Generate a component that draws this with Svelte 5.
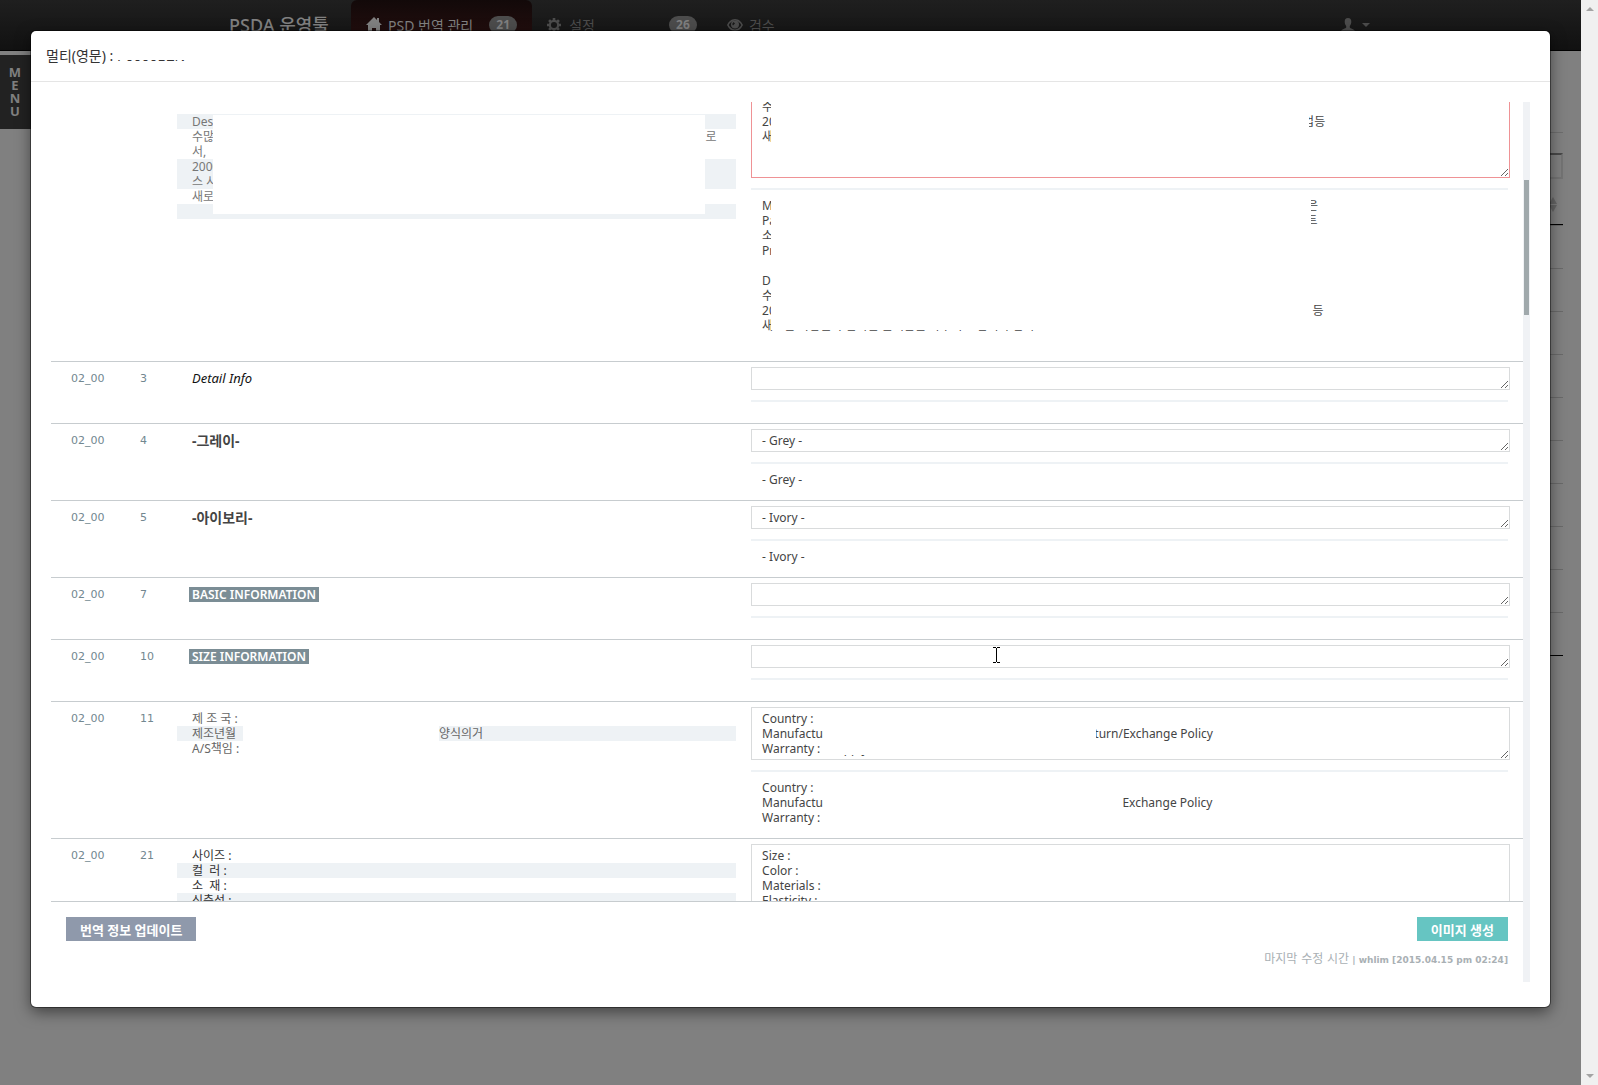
<script>
	import { onMount } from 'svelte'

	const gap = (n) => ' '.repeat(n)

	const rows = [
		{
			code: '02_00',
			no: 2,
			tone: 'soft',
			source: ['', '', '', '', '', '', '', 'Desc', '수많은' + gap(154) + '로\n서,', '2000\n스 사', '새로운', ''],
			value: 'Ma\nPa\n소재\nPro\n\nDe\n수많\n20' + gap(169) + '업등\n새\n\n',
			reference: 'Ma' + gap(169) + '은\nPa' + gap(170) + '트\n소재\nPro\n\nDe\n수많\n20' + gap(172) + '등\n새로운 사람들과 만나는 즐거움을 나누어 드립니다 감사\n ',
			warning: true,
			sourceMasks: [{ left: 36, top: 106, width: 492, height: 99 }],
			masks: [
				{ left: 20, top: 90, width: 538, height: 70 },
				{ left: 20, top: 190, width: 540, height: 133 },
				{ left: 20, top: 310, width: 500, height: 15 }
			]
		},
		{ code: '02_00', no: 3, tone: 'italic', source: ['Detail Info'], value: '', reference: '' },
		{ code: '02_00', no: 4, tone: 'bold', source: ['-그레이-'], value: '- Grey -', reference: '- Grey -' },
		{ code: '02_00', no: 5, tone: 'bold', source: ['-아이보리-'], value: '- Ivory -', reference: '- Ivory -' },
		{ code: '02_00', no: 7, tone: 'label', source: ['BASIC INFORMATION'], value: '', reference: '' },
		{ code: '02_00', no: 10, tone: 'label', source: ['SIZE INFORMATION'], value: '', reference: '', pointer: true },
		{
			code: '02_00',
			no: 11,
			tone: 'mid',
			source: ['제 조 국 :', '제조년월' + gap(65) + '양식의거', 'A/S책임 :'],
			value: 'Country :\nManufactu' + gap(87) + 'turn/Exchange Policy\nWarranty :   Supply staff,',
			reference: 'Country :\nManufactu' + gap(96) + 'Exchange Policy\nWarranty :',
			sourceMasks: [{ left: 66, top: 15, width: 196, height: 30 }],
			masks: [
				{ left: 74, top: 19, width: 271, height: 15 },
				{ left: 74, top: 34, width: 130, height: 14 }
			]
		},
		{
			code: '02_00',
			no: 21,
			tone: 'dark',
			source: ['사이즈 :', '컬  러 :', '소  재 :', '신축성 :', '비침 :', '안감 :'],
			value: 'Size :\nColor :\nMaterials :\nElasticity :\nSheer :\nLining :',
			reference: 'Size :\nColor :\nMaterials :\nElasticity :\nSheer :\nLining :'
		}
	]

	const listRows = Array(10)

	let scroller

	onMount(() => {
		scroller.scrollTop = 103
	})

	const box = (m) => `left:${m.left}px;top:${m.top}px;width:${m.width}px;height:${m.height}px`
</script>

<div class="screen">
	<div class="page">
		<nav class="navbar">
			<a class="brand" href="#home">PSDA 운영툴</a>
			<a class="tab active" href="#translate">
				<svg width="16" height="16" viewBox="0 0 16 16"><path d="M8 0 0 8h2v8h4v-5h4v5h4V8h2l-3-3V1h-2v2z" /></svg>
				<span>PSD 번역 관리</span>
				<span class="badge">21</span>
			</a>
			<a class="tab settings" href="#settings">
				<svg width="14" height="14" viewBox="0 0 16 16"><path fill-rule="evenodd" d="M6.500 0h3v2.200l1.500.6 1.600-1.500 2.100 2.100-1.500 1.600.6 1.500H16v3h-2.200l-.6 1.500 1.500 1.600-2.100 2.100-1.600-1.500-1.500.6V16h-3v-2.200L5 13.200l-1.600 1.500-2.100-2.100L2.800 11l-.6-1.500H0v-3h2.200L2.800 5 1.300 3.400l2.100-2.100L5 2.800l1.500-.6zM8 4.500a3.500 3.500 0 1 0 0 7 3.500 3.500 0 0 0 0-7z" /></svg>
				<span>설정</span>
				<span class="badge">26</span>
			</a>
			<a class="tab" href="#review">
				<svg width="16" height="14" viewBox="0 0 16 14"><path fill-rule="evenodd" d="M8 1C4 1 1.500 4 0 7c1.500 3 4 6 8 6s6.500-3 8-6c-1.500-3-4-6-8-6zm0 1.500c2.900 0 5 2.200 6.300 4.500C13 9.300 10.900 11.500 8 11.500S3 9.300 1.700 7C3 4.700 5.100 2.500 8 2.500z" /><path fill-rule="evenodd" d="M8 2.500a4 4 0 1 0 0 8 4 4 0 0 0 0-8zM6.500 4 8 5.500 6 7.500 5.200 6z" /></svg>
				<span>검수</span>
			</a>
			<button class="user" aria-label="user menu">
				<svg width="14" height="15" viewBox="0 0 14 15"><path d="M7 0c2.400 0 3.400 1.600 3.300 4-.1 1.800-.7 3.100-1.500 4v1.500c0 1 5.200 1.500 5.200 4V15H0v-1.500c0-2.500 5.200-3 5.200-4V8C4.400 7.100 3.800 5.800 3.700 4 3.600 1.600 4.600 0 7 0z" /></svg>
				<svg width="8" height="4" viewBox="0 0 8 4"><path d="M0 0h8L4 4z" /></svg>
			</button>
		</nav>
		<main class="list">
			<hr />
			<input type="text" aria-label="search" />
			<table>
				<thead>
					<tr>
						<th>
							<svg width="8" height="15" viewBox="0 0 8 15"><path d="M0 7l4-7 4 7zM0 8h8l-4 7z" /></svg>
						</th>
					</tr>
				</thead>
				<tbody>
					{#each listRows as _}
						<tr><td></td></tr>
					{/each}
					<tr class="last"><td></td></tr>
				</tbody>
			</table>
		</main>
	</div>
	<div class="page-scroll">
		<svg width="8" height="4" viewBox="0 0 8 4"><path d="M0 4h8L4 0z" /></svg>
		<svg width="8" height="4" viewBox="0 0 8 4"><path d="M0 0h8L4 4z" /></svg>
	</div>

	<button class="menu"><span>M</span><span>E</span><span>N</span><span>U</span></button>

	<section class="modal" role="dialog" aria-label="멀티(영문)">
		<header>
			<h1>멀티(영문) : <span class="product">P0000BZN<i></i></span></h1>
		</header>
		<div class="body">
			<div class="content">
				<div class="scroller" bind:this={scroller}>
					<table class="texts">
						<colgroup>
							<col class="c-code" />
							<col class="c-no" />
							<col class="c-source" />
							<col />
						</colgroup>
						<tbody>
							{#each rows as row}
								<tr>
									<td class="code">{row.code}</td>
									<td class="no">{row.no}</td>
									<td class="source {row.tone}">
										<div class="cell">
											{#each row.source as line}
												<p><span>{line}</span></p>
											{/each}
											{#each row.sourceMasks ?? [] as m}
												<i class="mask" style={box(m)}></i>
											{/each}
										</div>
									</td>
									<td class="target">
										<div class="cell">
											<textarea
												class:warning={row.warning}
												rows={row.value.split('\n').length}
												aria-label="translation {row.no}"
												spellcheck="false"
												value={row.value}
											></textarea>
											<hr />
											<p class="reference">{row.reference}</p>
											{#each row.masks ?? [] as m}
												<i class="mask" style={box(m)}></i>
											{/each}
											{#if row.pointer}
												<svg class="pointer" width="7" height="16" viewBox="0 0 7 16" shape-rendering="crispEdges">
													<path d="M0 0h3v1H0zM4 0h3v1H4zM3 1h1v14H3zM0 15h3v1H0zM4 15h3v1H4z" />
												</svg>
											{/if}
										</div>
									</td>
								</tr>
							{/each}
						</tbody>
					</table>
				</div>
				<footer>
					<div class="actions">
						<button class="update">번역 정보 업데이트</button>
						<button class="create">이미지 생성</button>
					</div>
					<p><span>마지막 수정 시간</span> | whlim [2015.04.15 pm 02:24]</p>
				</footer>
			</div>
			<div class="track"><div class="thumb"></div></div>
		</div>
	</section>
</div>

<style>
	:global(body) {
		margin: 0;
		font-family: 'Noto Sans', 'Noto Sans CJK KR', sans-serif;
		font-size: 12px;
		line-height: 15px;
	}
	.screen {
		position: relative;
		display: flex;
		height: 100vh;
		overflow: hidden;
		background: #808080;
	}
	p,
	h1 {
		margin: 0;
	}
	button {
		font-family: inherit;
		border: 0 none;
		padding: 0;
	}
	hr {
		border: 0 none;
		margin: 0;
	}

	/* page behind the dialog */
	.page {
		flex: 1;
	}
	.navbar {
		display: flex;
		align-items: stretch;
		height: 50px;
		padding-left: 229px;
		border-bottom: 1px solid #000;
		background: linear-gradient(#1f1f1f, #111);
		color: #4c4c4c;
		fill: #4c4c4c;
	}
	.navbar a {
		display: flex;
		align-items: center;
		color: inherit;
		text-decoration: none;
	}
	.brand {
		width: 122px;
		font-size: 18px;
		font-weight: 500;
		white-space: nowrap;
	}
	.navbar a.brand {
		color: #808080;
	}
	.tab {
		gap: 6px;
		padding: 0 15px;
		font-size: 14px;
	}
	.navbar .active {
		color: #808080;
		fill: #808080;
		border-radius: 6px 6px 0 0;
		background: linear-gradient(#120909, #2a1010);
	}
	.tab .badge {
		min-width: 28px;
		margin-left: 10px;
		border-radius: 9px;
		background: #4c4c4c;
		color: #808080;
		font-size: 12px;
		font-weight: bold;
		line-height: 18px;
		text-align: center;
	}
	.tab.settings {
		gap: 8px;
	}
	.settings .badge {
		margin-left: 66px;
	}
	.user {
		display: flex;
		align-items: center;
		gap: 7px;
		margin: 0 211px 0 auto;
		background: transparent;
		fill: #4c4c4c;
	}
	.list {
		padding: 81px 18px 0 31px;
	}
	.list hr {
		height: 1px;
		background: #6e6e6e;
	}
	.list input {
		display: block;
		width: 200px;
		height: 26px;
		box-sizing: border-box;
		margin: 20px 0 0 auto;
		border: 2px solid #747474;
		border-top-color: #484848;
		background: transparent;
	}
	.list table {
		width: 100%;
		border-spacing: 0;
	}
	.list th {
		height: 45px;
		padding: 0 6px 0 0;
		border-bottom: 1px solid #000;
		text-align: right;
		fill: #666;
	}
	.list th svg {
		display: block;
		margin: 5px 0 0 auto;
	}
	.list td {
		height: 42px;
		padding: 0;
		border-top: 1px solid #6a6a6a;
	}
	.list .last td {
		border-color: #000;
	}
	.page-scroll {
		display: flex;
		flex-direction: column;
		justify-content: space-between;
		align-items: center;
		width: 17px;
		box-sizing: border-box;
		padding: 7px 0;
		background: #f0f0f0;
		fill: #a3a3a3;
	}
	.menu {
		position: absolute;
		left: 0;
		top: 55px;
		display: flex;
		flex-direction: column;
		align-items: center;
		justify-content: center;
		width: 34px;
		height: 74px;
		padding-right: 4px;
		border-radius: 0 3px 3px 0;
		background: #222;
		color: #808080;
		font-size: 13px;
		font-weight: bold;
		line-height: 13px;
	}

	/* dialog */
	.modal {
		position: absolute;
		inset: 31px 48px 78px 31px;
		display: flex;
		flex-direction: column;
		border-radius: 5px;
		background: #fff;
		box-shadow: 0 0 0 1px rgba(0, 0, 0, 0.4), 0 5px 15px rgba(0, 0, 0, 0.5);
		color: #333;
	}
	header {
		padding: 15px;
		border-bottom: 1px solid #e5e5e5;
	}
	h1 {
		font-size: 14px;
		font-weight: normal;
		line-height: 20px;
	}
	.product {
		position: relative;
	}
	.product i {
		position: absolute;
		inset: 0 0 5px 0;
		background: #fff;
	}
	.body {
		flex: 1;
		display: flex;
		min-height: 0;
		padding: 20px 20px 25px;
	}
	.content {
		flex: 1;
		display: flex;
		flex-direction: column;
		min-width: 0;
	}
	.scroller {
		flex: 1;
		overflow-y: auto;
		scrollbar-width: none;
	}
	.track {
		width: 7px;
		box-sizing: border-box;
		padding: 78px 1px 0;
		background: #f0f2f5;
	}
	.thumb {
		width: 5px;
		height: 135px;
		background: #a0a9ac;
	}
	.texts {
		width: 100%;
		table-layout: fixed;
		border-spacing: 0;
	}
	.c-code {
		width: 89px;
	}
	.c-no {
		width: 37px;
	}
	.c-source {
		width: 39%;
	}
	.texts td {
		padding: 9px 0 0;
		border-top: 1px solid #c7cccf;
		vertical-align: top;
	}
	.code,
	.no {
		color: #728790;
		font-family: 'DejaVu Sans', sans-serif;
		font-size: 11px;
	}
	.texts .code {
		padding-left: 20px;
	}
	.cell {
		position: relative;
	}
	.texts .source {
		padding-right: 15px;
	}
	.source p {
		min-height: 15px;
		padding-left: 15px;
		white-space: pre-wrap;
	}
	.source p:nth-child(even) {
		background: #eef2f5;
	}
	.soft {
		color: #777;
	}
	.mid {
		color: #666;
	}
	.italic {
		color: #111;
		font-size: 13px;
		font-style: italic;
	}
	.bold {
		color: #444;
		font-size: 14px;
		font-weight: bold;
	}
	.label p {
		padding-left: 12px;
	}
	.label span {
		display: inline-block;
		padding: 0 3px;
		background: #7b8d95;
		color: #fff;
		font-weight: 600;
	}
	.texts .target {
		padding: 5px 13px 0 0;
	}
	textarea {
		display: block;
		width: 100%;
		box-sizing: border-box;
		margin: 0;
		padding: 3px 10px;
		border: 1px solid #d9dbdc;
		border-radius: 0;
		background: #fff;
		color: #444;
		font: inherit;
		overflow: hidden;
		resize: vertical;
	}
	.warning {
		border-color: #ef9295;
	}
	.target hr {
		height: 2px;
		margin: 10px 2px 0 0;
		background: #eef2f5;
	}
	.reference {
		padding: 8px 11px 13px;
		color: #444;
		white-space: pre-wrap;
	}
	.mask {
		position: absolute;
		background: #fff;
	}
	.pointer {
		position: absolute;
		left: 242px;
		top: 2px;
	}
	footer {
		padding: 15px 15px 14px;
		border-top: 1px solid #c7cccf;
		text-align: right;
	}
	.actions {
		display: flex;
		justify-content: space-between;
	}
	.actions button {
		height: 24px;
		padding: 0 14px;
		color: #fff;
		font-size: 13px;
		font-weight: bold;
	}
	.update {
		background: #8f99ab;
	}
	.create {
		background: #66c5c2;
	}
	footer p {
		margin-top: 11px;
		color: #a9b0b4;
		font-family: 'DejaVu Sans', 'Noto Sans CJK KR', sans-serif;
		font-size: 9px;
		font-weight: bold;
	}
	footer p span {
		font-size: 12px;
		font-weight: normal;
	}
</style>
